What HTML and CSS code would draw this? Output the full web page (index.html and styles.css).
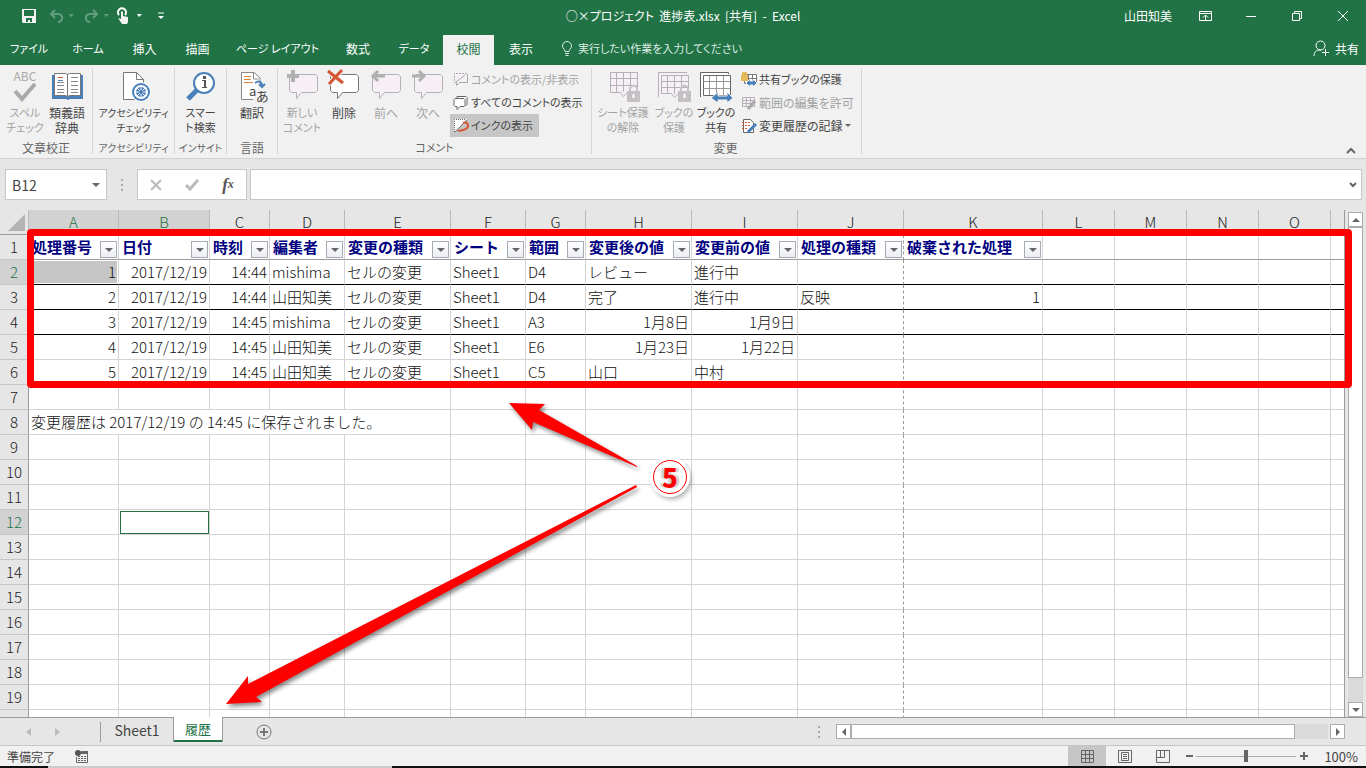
FILE: index.html
```html
<!DOCTYPE html>
<html lang="ja">
<head>
    <meta charset="UTF-8">
    <meta name="viewport" content="width=device-width, initial-scale=1.0">
    <title>進捗表.xlsx - Excel</title>
    <link rel="stylesheet" href="styles.css">
</head>
<body>
    <header class="titlebar">
        <div class="quick">
            <button class="qbtn" aria-label="上書き保存"><svg width="14" height="14"><path fill="#f3f3f3" fill-rule="evenodd" d="M0 0h14v14H1l-1-1zM2 1v6h10V1zM4 9v4h2v-2h2v2h2V9z"/></svg></button>
            <button class="qbtn faded" aria-label="元に戻す"><svg width="22" height="14"><path fill="none" stroke="#fff" stroke-width="2" d="M6 1 2 5l4 4M2 5h7c6 0 5 8 0 8"/><path fill="#fff" d="M20 5h5l-3 3z"/></svg></button>
            <button class="qbtn faded" aria-label="やり直し"><svg width="22" height="14"><path fill="none" stroke="#fff" stroke-width="2" d="M9 1l4 4-4 4M13 5H6c-6 0-5 8 0 8"/><path fill="#fff" d="M20 5h5l-3 3z"/></svg></button>
            <button class="qbtn touch" aria-label="タッチ/マウス モード"><svg width="26" height="16"><path fill="none" stroke="#fff" stroke-width="2" d="M2 7a4 4 0 1 1 6 0"/><path fill="#f3f3f3" d="M4 4c0-1 2-1 2 0v4l5 1v5l-1 2H5L1 10l3 1z"/><path fill="#fff" d="M20 6h5l-3 3z"/></svg></button>
            <button class="qbtn custom" aria-label="クイック アクセス"><svg width="6" height="8"><path stroke="#fff" d="M0 1h6"/><path fill="#fff" d="M0 4h6L3 7z"/></svg></button>
        </div>
        <h1 class="doc-title">○×プロジェクト  進捗表.xlsx  [共有]  -  Excel</h1>
        <div class="window-side">
            <span class="user">山田知美</span>
            <button class="wbtn" aria-label="リボンの表示オプション"><svg width="13" height="10"><path fill="none" stroke="#fff" d="M.5.5h12v9H.5zM0 2.500h13M6.500 9V4M4 6.500l2.500-2.500L9 6.500"/></svg></button>
            <button class="wbtn" aria-label="最小化"><svg width="10" height="10"><path stroke="#fff" d="M0 5.500h10"/></svg></button>
            <button class="wbtn" aria-label="元のサイズに戻す"><svg width="10" height="10"><path fill="none" stroke="#fff" d="M.5 2.500h7v7h-7zM2.500 2V.5h7v7H8"/></svg></button>
            <button class="wbtn" aria-label="閉じる"><svg width="10" height="10"><path stroke="#fff" d="M0 0l10 10M10 0 0 10"/></svg></button>
        </div>
    </header>

    <nav class="tabs">
        <div class="tab-list">
            <a href="#" class="kana">ファイル</a>
            <a href="#" class="kana">ホーム</a>
            <a href="#">挿入</a>
            <a href="#">描画</a>
            <a href="#" class="kana">ページ レイアウト</a>
            <a href="#">数式</a>
            <a href="#" class="kana">データ</a>
            <a href="#" class="active">校閲</a>
            <a href="#">表示</a>
        </div>
        <button class="tell-me kana"><svg width="12" height="15"><path fill="none" stroke="#dcebe2" d="M4 10.500c0-2-2.500-3-2.500-5.500a4 4 0 0 1 9 0c0 2.500-2.500 3.500-2.500 5.500zM4 12.500h4M4.500 14.500h3"/></svg>実行したい作業を入力してください</button>
        <button class="share"><svg width="16" height="17"><path fill="none" stroke="#fff" d="M1 16c0-4 2-6 6-6h1"/><circle cx="7.500" cy="5.500" r="4.500" fill="none" stroke="#fff"/><path stroke="#fff" d="M12.500 9v7M9 12.500h7"/></svg>共有</button>
    </nav>

    <section class="ribbon">
        <div class="group">
            <div class="group-body">
                <button class="big kana" disabled><svg width="36" height="36"><text x="18" y="13" text-anchor="middle" font-size="12" fill="#a9a9a9">ABC</text><path fill="none" stroke="#a9a9a9" stroke-width="4" d="M8 23l7 8 13-15"/></svg><span>スペル<br>チェック</span></button>
                <button class="big"><svg width="36" height="36"><path fill="#4a80b9" d="M3 7h31v24H21l-2 1-2-1H3z"/><path fill="#fff" stroke="#777" d="M5.500 5.500h11l2 1 2-1h11v22h-11l-2 1-2-1h-11zM18.500 6v22"/><path stroke="#888" d="M8 14.500h7M8 17.500h7M8 21.500h7M8 24.500h7M22 9.500h7M22 13.500h7M22 17.500h7M22 21.500h7M22 24.500h7"/><path stroke="#d65532" d="M9 9.500h5"/><path stroke="#4a80b9" d="M9 12.500h5"/></svg><span>類義語<br>辞典</span></button>
            </div>
            <h2>文章校正</h2>
        </div>
        <div class="group">
            <div class="group-body">
                <button class="big wide tight"><svg width="36" height="36"><path fill="#fff" stroke="#777" d="M7.500 4.500h13l7 7v20h-20z"/><path fill="none" stroke="#777" d="M20.500 4.500v7h7"/><circle cx="25" cy="24" r="10" fill="#fff"/><circle cx="25" cy="24" r="9" fill="#4a80b9"/><circle cx="25" cy="24" r="6" fill="none" stroke="#fff" stroke-width="2"/><path stroke="#fff" d="M25 18v12M19 24h12M21 20l8 8M29 20l-8 8"/><circle cx="25" cy="24" r="2" fill="#4a80b9"/></svg><span>アクセシビリティ<br>チェック</span></button>
            </div>
            <h2 class="tight">アクセシビリティ</h2>
        </div>
        <div class="group">
            <div class="group-body">
                <button class="big kana"><svg width="36" height="36"><path stroke="#4a80b9" stroke-width="5" d="M14 22 5 31"/><circle cx="21" cy="15" r="10" fill="#fff" stroke="#4a80b9" stroke-width="2"/><path fill="#555" d="M19 12h4v7h1v1h-5v-1h2v-6h-2zM20 8h3v3h-3z"/></svg><span>スマー<br>ト検索</span></button>
            </div>
            <h2 class="tight">インサイト</h2>
        </div>
        <div class="group">
            <div class="group-body">
                <button class="big"><svg width="36" height="36"><path fill="#fff" stroke="#888" d="M26 14v-4l-6-5.500H7.500v27H19"/><path fill="none" stroke="#888" d="M19.500 5v6h5"/><path stroke="#e0823d" d="M10 8.500h7M10 11.500h7M10 14.500h9"/><path fill="none" stroke="#4a80b9" stroke-width="2" d="M21 15c4-3 7-1 7 3M25 16l3 3 3-3"/><text x="15" y="28" font-size="13" fill="#444">a</text><text x="22" y="33" font-size="13" fill="#444">あ</text></svg><span>翻訳</span></button>
            </div>
            <h2>言語</h2>
        </div>
        <div class="group">
            <div class="group-body">
                <button class="big kana" disabled><svg width="36" height="36"><path fill="#f6eff6" stroke="#b5b0b5" d="M7 6.500h24.500l2 2v14l-2 2h-14l-5 6v-6h-5l-2-2v-14z"/><path stroke="#b0b0b0" stroke-width="4" d="M3 8h12M9 2v12"/></svg><span>新しい<br>コメント</span></button>
                <button class="big"><svg width="36" height="36"><path fill="#fff" stroke="#777" d="M6 6.500h24.500l2 2v14l-2 2h-14l-5 6v-6h-5l-2-2v-14z"/><path stroke="#f1f1f1" stroke-width="5" d="M2 3l15 12M16 2 3 16"/><path stroke="#d65532" stroke-width="3" d="M2 3l15 12M16 2 3 16"/></svg><span>削除</span></button>
                <button class="big" disabled><svg width="36" height="36"><path fill="#f6eff6" stroke="#b5b0b5" d="M6 6.500h24.500l2 2v14l-2 2h-14l-5 6v-6h-5l-2-2v-14z"/><path fill="none" stroke="#b0b0b0" stroke-width="3" d="M17 8H5M10 3 5 8l5 5"/></svg><span>前へ</span></button>
                <button class="big" disabled><svg width="36" height="36"><path fill="#f6eff6" stroke="#b5b0b5" d="M6 6.500h24.500l2 2v14l-2 2h-14l-5 6v-6h-5l-2-2v-14z"/><path fill="none" stroke="#b0b0b0" stroke-width="3" d="M2 8h12M9 3l5 5-5 5"/></svg><span>次へ</span></button>
                <div class="small-list">
                    <button class="small kana" disabled><svg width="16" height="16"><path fill="#f6eff6" stroke="#aaa" stroke-dasharray="2 1" d="M14 1.500H1.500v9"/><path fill="none" stroke="#aaa" d="M14.500 2v8.500h-8l-3 3v-3H2M3 10l9-7"/></svg>コメントの表示/非表示</button>
                    <button class="small kana"><svg width="16" height="16"><path fill="#fff" stroke="#666" d="M4 3.500V1.500h9l1 1v7l-1 1h-1"/><path fill="#fff" stroke="#666" d="M2 3.500h9l1 1v6l-1 1H7l-3 3v-3H2l-1-1v-6z"/></svg>すべてのコメントの表示</button>
                    <button class="small kana pressed"><svg width="16" height="16"><path fill="#fff" d="M1 1h13L1 14z"/><path fill="none" stroke="#666" stroke-dasharray="1 1" d="M1.500 14V1.500H13"/><path stroke="#777" d="M2 14 14 2"/><path fill="none" stroke="#d65532" stroke-width="2" d="M10 5c5-2 6 3 4 5-3 3-6 2-9 3"/></svg>インクの表示</button>
                </div>
            </div>
            <h2 class="kana">コメント</h2>
        </div>
        <div class="group">
            <div class="group-body">
                <button class="big mid kana" disabled><svg width="36" height="36"><path fill="#f6eff6" stroke="#b5b0b5" d="M5.500 4.500h27v20h-10l-4 4-3-4h-10zM11.500 4v20M18.500 4v20M25.500 4v20M5 10.500h27M5 17.500h27"/><path fill="none" stroke="#c8c4c8" stroke-width="2" d="M25 24v-4q4-5 7 0v4"/><path fill="#c4c0c4" d="M22 23h13v11H22z"/><path stroke="#fff" stroke-width="2" d="M28.500 26v4"/></svg><span>シート保護<br>の解除</span></button>
                <button class="big kana" disabled><svg width="36" height="36"><path fill="#f6eff6" stroke="#b5b0b5" d="M2.500 29V4.500h28V6M5.500 7.500h27v18h-10l-4 4-3-4h-10zM11.500 8v18M18.500 8v18M25.500 8v18M5 13.500h27M5 19.500h27"/><path fill="none" stroke="#c8c4c8" stroke-width="2" d="M25 24v-4q4-5 7 0v4"/><path fill="#c4c0c4" d="M22 23h13v11H22z"/><path stroke="#fff" stroke-width="2" d="M28.500 26v4"/></svg><span>ブックの<br>保護</span></button>
                <button class="big kana"><svg width="36" height="36"><path fill="#fff" stroke="#666" d="M2.500 29V4.500h28V6M5.500 7.500h27v20h-27z"/><path fill="none" stroke="#999" d="M11.500 8v19M18.500 8v19M25.500 8v19M5 13.500h27M5 20.500h27"/><path fill="#4a80b9" stroke="#f1f1f1" d="M13 30l7-6v4h9v-4l6 6-6 5v-3h-9v3z"/></svg><span>ブックの<br>共有</span></button>
                <div class="small-list">
                    <button class="small kana"><svg width="16" height="16"><path fill="#fff" stroke="#777" d="M3.500 2.500h12v9h-12zM7.500 2v9M11.500 2v9M3 6.500h12"/><path fill="#e8b95b" d="M0 3h7v6H0z"/><path fill="none" stroke="#e8b95b" stroke-width="2" d="M2 4V1h3v3"/><path fill="#4a80b9" stroke="#f1f1f1" d="M5 11l4-4v2h3V7l4 4-4 4v-2H9v2z"/></svg>共有ブックの保護</button>
                    <button class="small" disabled><svg width="16" height="16"><path fill="#f6eff6" stroke="#b5b0b5" d="M1.500 2.500h12v9h-12zM5.500 2v9M9.500 2v9M1 5.500h12M1 8.500h12"/><path stroke="#a9a9a9" stroke-width="3" d="M14 6l-7 8"/></svg>範囲の編集を許可</button>
                    <button class="small"><svg width="16" height="16"><path fill="#fff" stroke="#666" d="M2.500 1.500h7l3 3v10h-10z"/><path stroke="#d65532" stroke-dasharray="2 1" d="M1 4.500h8M1 7.500h8M1 10.500h5"/><path stroke="#4a80b9" stroke-width="3" d="M15 6l-8 8"/></svg>変更履歴の記録<svg width="6" height="4"><path fill="#666" d="M0 0h6L3 3z"/></svg></button>
                </div>
            </div>
            <h2>変更</h2>
        </div>
        <button class="collapse" aria-label="リボンを折りたたむ"><svg width="10" height="7"><path fill="none" stroke="#666" stroke-width="2" d="M1 6l4-4 4 4"/></svg></button>
    </section>

    <section class="formula-bar">
        <div class="name-box">
            <input type="text" value="B12" aria-label="名前ボックス">
            <svg width="8" height="4"><path fill="#666" d="M0 0h8L4 4z"/></svg>
        </div>
        <svg class="grip" width="3" height="12"><path fill="#aaa" d="M0 0h2v2H0zM0 5h2v2H0zM0 10h2v2H0z"/></svg>
        <div class="fx-box">
            <button aria-label="キャンセル"><svg width="12" height="12"><path stroke="#bbb" stroke-width="2" d="M1 1l10 10M11 1 1 11"/></svg></button>
            <button aria-label="入力"><svg width="14" height="12"><path fill="none" stroke="#bbb" stroke-width="3" d="M1 6l4 4 8-9"/></svg></button>
            <button class="fx" aria-label="関数の挿入"><i>f</i><small>x</small></button>
        </div>
        <div class="formula-input">
            <input type="text" aria-label="数式バー">
            <svg width="8" height="6"><path fill="none" stroke="#666" stroke-width="2" d="M1 1l3 3 3-3"/></svg>
        </div>
    </section>

    <main class="workspace">
        <div class="sheet">
            <table>
                <colgroup>
                    <col class="w-head"><col class="w-a"><col class="w-b"><col class="w-s"><col class="w-m"><col class="w-l"><col class="w-m"><col class="w-s"><col class="w-l"><col class="w-l"><col class="w-l"><col class="w-k"><col class="w-n"><col class="w-n"><col class="w-n"><col class="w-n"><col>
                </colgroup>
                <thead>
                    <tr><th class="corner"><svg width="17" height="17"><path fill="#b4b4b4" d="M17 0v17H0z"/></svg></th><th class="sel">A</th><th class="sel">B</th><th>C</th><th>D</th><th>E</th><th>F</th><th>G</th><th>H</th><th>I</th><th>J</th><th>K</th><th>L</th><th>M</th><th>N</th><th>O</th><th></th></tr>
                </thead>
                <tbody>
                    <tr class="titles">
                        <th>1</th>
                        <td><div>処理番号<button aria-label="処理番号"></button></div></td>
                        <td><div>日付<button aria-label="日付"></button></div></td>
                        <td><div>時刻<button aria-label="時刻"></button></div></td>
                        <td><div>編集者<button aria-label="編集者"></button></div></td>
                        <td><div>変更の種類<button aria-label="変更の種類"></button></div></td>
                        <td><div>シート<button aria-label="シート"></button></div></td>
                        <td><div>範囲<button aria-label="範囲"></button></div></td>
                        <td><div>変更後の値<button aria-label="変更後の値"></button></div></td>
                        <td><div>変更前の値<button aria-label="変更前の値"></button></div></td>
                        <td><div>処理の種類<button aria-label="処理の種類"></button></div></td>
                        <td><div>破棄された処理<button aria-label="破棄された処理"></button></div></td>
                        <td></td><td></td><td></td><td></td><td></td>
                    </tr>
                    <tr class="ruled"><th class="sel">2</th><td class="num picked">1</td><td class="num">2017/12/19</td><td class="num">14:44</td><td>mishima</td><td>セルの変更</td><td>Sheet1</td><td>D4</td><td>レビュー</td><td>進行中</td><td></td><td></td><td></td><td></td><td></td><td></td><td></td></tr>
                    <tr class="ruled"><th>3</th><td class="num">2</td><td class="num">2017/12/19</td><td class="num">14:44</td><td>山田知美</td><td>セルの変更</td><td>Sheet1</td><td>D4</td><td>完了</td><td>進行中</td><td>反映</td><td class="num">1</td><td></td><td></td><td></td><td></td><td></td></tr>
                    <tr class="ruled"><th>4</th><td class="num">3</td><td class="num">2017/12/19</td><td class="num">14:45</td><td>mishima</td><td>セルの変更</td><td>Sheet1</td><td>A3</td><td class="num">1月8日</td><td class="num">1月9日</td><td></td><td></td><td></td><td></td><td></td><td></td><td></td></tr>
                    <tr><th>5</th><td class="num">4</td><td class="num">2017/12/19</td><td class="num">14:45</td><td>山田知美</td><td>セルの変更</td><td>Sheet1</td><td>E6</td><td class="num">1月23日</td><td class="num">1月22日</td><td></td><td></td><td></td><td></td><td></td><td></td><td></td></tr>
                    <tr><th>6</th><td class="num">5</td><td class="num">2017/12/19</td><td class="num">14:45</td><td>山田知美</td><td>セルの変更</td><td>Sheet1</td><td>C5</td><td>山口</td><td>中村</td><td></td><td></td><td></td><td></td><td></td><td></td><td></td></tr>
                    <tr><th>7</th><td></td><td></td><td></td><td></td><td></td><td></td><td></td><td></td><td></td><td></td><td></td><td></td><td></td><td></td><td></td><td></td></tr>
                    <tr class="note"><th>8</th><td colspan="5">変更履歴は 2017/12/19 の 14:45 に保存されました。</td><td></td><td></td><td></td><td></td><td class="page-edge"></td><td></td><td></td><td></td><td></td><td></td><td></td></tr>
                    <tr><th>9</th><td></td><td></td><td></td><td></td><td></td><td></td><td></td><td></td><td></td><td></td><td></td><td></td><td></td><td></td><td></td><td></td></tr>
                    <tr><th>10</th><td></td><td></td><td></td><td></td><td></td><td></td><td></td><td></td><td></td><td></td><td></td><td></td><td></td><td></td><td></td><td></td></tr>
                    <tr><th>11</th><td></td><td></td><td></td><td></td><td></td><td></td><td></td><td></td><td></td><td></td><td></td><td></td><td></td><td></td><td></td><td></td></tr>
                    <tr><th class="sel">12</th><td></td><td class="cursor"></td><td></td><td></td><td></td><td></td><td></td><td></td><td></td><td></td><td></td><td></td><td></td><td></td><td></td><td></td></tr>
                    <tr><th>13</th><td></td><td></td><td></td><td></td><td></td><td></td><td></td><td></td><td></td><td></td><td></td><td></td><td></td><td></td><td></td><td></td></tr>
                    <tr><th>14</th><td></td><td></td><td></td><td></td><td></td><td></td><td></td><td></td><td></td><td></td><td></td><td></td><td></td><td></td><td></td><td></td></tr>
                    <tr><th>15</th><td></td><td></td><td></td><td></td><td></td><td></td><td></td><td></td><td></td><td></td><td></td><td></td><td></td><td></td><td></td><td></td></tr>
                    <tr><th>16</th><td></td><td></td><td></td><td></td><td></td><td></td><td></td><td></td><td></td><td></td><td></td><td></td><td></td><td></td><td></td><td></td></tr>
                    <tr><th>17</th><td></td><td></td><td></td><td></td><td></td><td></td><td></td><td></td><td></td><td></td><td></td><td></td><td></td><td></td><td></td><td></td></tr>
                    <tr><th>18</th><td></td><td></td><td></td><td></td><td></td><td></td><td></td><td></td><td></td><td></td><td></td><td></td><td></td><td></td><td></td><td></td></tr>
                    <tr><th>19</th><td></td><td></td><td></td><td></td><td></td><td></td><td></td><td></td><td></td><td></td><td></td><td></td><td></td><td></td><td></td><td></td></tr>
                    <tr><th>20</th><td></td><td></td><td></td><td></td><td></td><td></td><td></td><td></td><td></td><td></td><td></td><td></td><td></td><td></td><td></td><td></td></tr>
                </tbody>
            </table>
        </div>
        <div class="vscroll">
            <button class="arrow" aria-label="上へ"><svg width="8" height="4"><path fill="#666" d="M4 0l4 4H0z"/></svg></button>
            <div class="track"><div class="thumb"></div></div>
            <button class="arrow" aria-label="下へ"><svg width="8" height="4"><path fill="#666" d="M0 0h8L4 4z"/></svg></button>
        </div>

        <!-- step 5 callout: frame, arrows and number -->
        <div class="frame"></div>
        <svg class="arrows" width="440" height="330">
            <path fill="#f00" d="M293 13l36 1-6 6 98 56v1L317 32l-1 8z"/>
            <path fill="#f00" d="M10 314l22-28v8L420 95l1 2L40 307l6 5z"/>
        </svg>
        <div class="step">5</div>
    </main>

    <footer class="sheet-bar">
        <div class="sheet-nav">
            <button aria-label="前のシート"><svg width="5" height="8"><path fill="#bbb" d="M5 0v8L0 4z"/></svg></button>
            <button aria-label="次のシート"><svg width="5" height="8"><path fill="#bbb" d="M0 0v8l5-4z"/></svg></button>
        </div>
        <button class="sheet-tab">Sheet1</button>
        <button class="sheet-tab current">履歴</button>
        <button class="add" aria-label="新しいシート"><svg width="16" height="16"><circle cx="8" cy="8" r="7" fill="none" stroke="#777"/><path stroke="#777" stroke-width="2" d="M8 4v8M4 8h8"/></svg></button>
        <svg class="grip" width="3" height="12"><path fill="#aaa" d="M0 0h2v2H0zM0 5h2v2H0zM0 10h2v2H0z"/></svg>
        <div class="hscroll">
            <button class="arrow" aria-label="左へ"><svg width="4" height="8"><path fill="#666" d="M4 0v8L0 4z"/></svg></button>
            <div class="track"><div class="thumb"></div></div>
            <button class="arrow" aria-label="右へ"><svg width="4" height="8"><path fill="#666" d="M0 0v8l4-4z"/></svg></button>
        </div>
    </footer>

    <div class="status">
        <span class="ready">準備完了</span>
        <button class="macro" aria-label="マクロの記録"><svg width="14" height="13"><path fill="none" stroke="#666" d="M7 1.500h5.500v11h-11V7"/><path fill="#666" d="M6 1h7v3H6z"/><path stroke="#666" stroke-dasharray="2 1" d="M3 6.500h8M3 8.500h8M3 10.500h8"/><circle cx="3" cy="3" r="3" fill="#555"/></svg></button>
        <div class="views">
            <button class="on" aria-label="標準"><svg width="13" height="13"><path fill="none" stroke="#666" d="M.5.5h12v12H.5zM4.500 0v13M8.500 0v13M0 4.500h13M0 8.500h13"/></svg></button>
            <button aria-label="ページ レイアウト"><svg width="14" height="13"><path fill="none" stroke="#666" d="M.5.5h13v12H.5zM3.500 2.500h7v8h-7zM5 4.500h4M5 6.500h4M5 8.500h4"/></svg></button>
            <button aria-label="改ページ プレビュー"><svg width="14" height="13"><path fill="none" stroke="#666" d="M.5.5h13v12H.5zM.5 7.500h8V0M4.500 0v7"/></svg></button>
        </div>
        <div class="zoom">
            <button aria-label="縮小"><svg width="7" height="8"><path stroke="#666" stroke-width="2" d="M0 4h7"/></svg></button>
            <input type="range" min="0" max="100" value="50" aria-label="ズーム">
            <button aria-label="拡大"><svg width="8" height="8"><path stroke="#666" stroke-width="2" d="M0 4h8M4 0v8"/></svg></button>
            <span>100%</span>
        </div>
    </div>
    <div class="taskbar"></div>
</body>
</html>
```
FILE: styles.css
```css
* {
    box-sizing: border-box;
}
body {
    margin: 0;
    height: 100vh;
    display: flex;
    flex-direction: column;
    overflow: hidden;
    background: #e6e6e6;
    color: #444;
    font-family: "Noto Sans CJK JP", sans-serif;
    font-size: 12px;
    line-height: 15px;
    font-feature-settings: "palt";
}
button {
    font: inherit;
    font-feature-settings: inherit;
    color: inherit;
    background: none;
    border: 0;
    padding: 0;
    display: flex;
    align-items: center;
    justify-content: center;
    white-space: nowrap;
}
svg {
    display: block;
    flex: none;
    overflow: visible;
}
h1, h2 {
    margin: 0;
    font-size: 12px;
    font-weight: normal;
}
.kana {
    font-size: 11px;
}
.tight {
    font-size: 10px;
}

/* title bar */
.titlebar {
    display: grid;
    grid-template-columns: 1fr auto 1fr;
    align-items: center;
    height: 34px;
    flex: none;
    padding-bottom: 3px;
    background: #217346;
    color: #fff;
}
.quick {
    display: flex;
    align-items: center;
    padding-left: 22px;
    gap: 13px;
}
.faded {
    opacity: .3;
}
.touch {
    margin-left: -2px;
}
.custom {
    margin-left: 2px;
}
.doc-title {
    white-space: pre;
    font-size: 12px;
}
.window-side {
    display: flex;
    align-items: center;
    justify-content: flex-end;
}
.user {
    margin-right: 10px;
}
.wbtn {
    width: 46px;
    height: 31px;
}

/* ribbon tabs */
.tabs {
    display: flex;
    height: 31px;
    flex: none;
    background: #217346;
    color: #fff;
}
.tab-list {
    display: grid;
    grid-template-columns: 58px 60px 53px 53px 107px 54px 58px 51px 54px;
}
.tab-list a {
    color: #fff;
    text-decoration: none;
    text-align: center;
    line-height: 29px;
    white-space: nowrap;
}
.tab-list .active {
    background: #f1f1f1;
    color: #217346;
    margin-top: 1px;
    line-height: 28px;
}
.tell-me {
    gap: 5px;
    margin-left: 13px;
    padding-bottom: 2px;
    color: #dcebe2;
}
.share {
    gap: 6px;
    margin-left: auto;
    padding: 0 7px 2px 0;
}

/* ribbon */
.ribbon {
    display: flex;
    height: 94px;
    flex: none;
    background: #f1f1f1;
    border-bottom: 1px solid #d2d2d2;
}
.group {
    display: flex;
    flex-direction: column;
    flex: none;
    align-items: center;
    margin: 3px 0 4px;
    padding: 0 3px;
    border-right: 1px solid #d5d5d5;
}
.group h2 {
    margin: auto 0 -1px;
    color: #666;
    white-space: nowrap;
    line-height: 15px;
}
.group h2.kana {
    font-size: 11px;
}
.group h2.tight {
    font-size: 10px;
}
.group-body {
    display: flex;
    align-items: flex-start;
}
.group:nth-child(1) {
    width: 93px;
}
.group:nth-child(2) {
    width: 82px;
}
.group:nth-child(3) {
    width: 52px;
}
.group:nth-child(4) {
    width: 51px;
}
.group:nth-child(5) {
    width: 314px;
    align-items: stretch;
    text-align: center;
}
.group:nth-child(6) {
    width: 270px;
    align-items: stretch;
    text-align: center;
    padding-left: 1px;
}
.big {
    width: 42px;
    flex: none;
    flex-direction: column;
    justify-content: flex-start;
    text-align: center;
}
.big span {
    margin-top: 1px;
}
.big.wide {
    width: 76px;
}
.big.mid {
    width: 60px;
}
button:disabled {
    color: #a3a3a3;
}
.small-list {
    display: flex;
    flex-direction: column;
    align-items: flex-start;
    margin-left: 1px;
}
.small {
    height: 23px;
    gap: 2px;
    padding: 0 3px;
}
.small.pressed {
    background: #c6c6c6;
    padding-right: 6px;
}
.collapse {
    margin: auto 10px 4px auto;
}

/* formula bar */
.formula-bar {
    display: flex;
    align-items: center;
    height: 51px;
    flex: none;
    padding: 0 4px 0 5px;
}
.name-box, .fx-box, .formula-input {
    display: flex;
    align-items: center;
    height: 31px;
    background: #fff;
    border: 1px solid #c6c6c6;
}
.formula-bar input {
    flex: 1;
    min-width: 0;
    border: 0;
    padding: 0 6px;
    background: none;
    color: #444;
    font: 14px "Noto Sans CJK JP", sans-serif;
}
.name-box {
    width: 102px;
    padding-right: 6px;
}
.formula-bar .grip {
    margin: 0 13px 0 14px;
}
.fx-box {
    width: 110px;
    margin-right: 3px;
}
.fx-box button {
    flex: 1;
}
.fx {
    font-family: "Liberation Serif", serif;
    font-size: 17px;
    font-weight: bold;
    color: #555;
}
.fx small {
    font-size: 12px;
    font-style: italic;
}
.formula-input {
    flex: 1;
    padding-right: 4px;
}

/* grid */
.workspace {
    position: relative;
    display: flex;
    flex: 1;
    min-height: 0;
}
.sheet {
    flex: 1;
    overflow: hidden;
    background: #fff;
    border-right: 1px solid #9b9b9b;
}
table {
    width: 100%;
    table-layout: fixed;
    border-collapse: separate;
    border-spacing: 0;
    font-size: 15px;
    font-weight: 300;
    line-height: 22px;
    font-feature-settings: normal;
}
.w-head { width: 29px; }
.w-a { width: 90px; }
.w-b { width: 91px; }
.w-s { width: 60px; }
.w-m { width: 75px; }
.w-l { width: 106px; }
.w-k { width: 139px; }
.w-n { width: 72px; }
td, th {
    height: 25px;
    padding: 0 2px;
    white-space: nowrap;
}
th {
    background: #e6e6e6;
    color: #222;
    font-weight: 300;
    border-right: 1px solid #bababa;
    border-bottom: 1px solid #9b9b9b;
    padding: 0;
}
tbody th {
    border-right-color: #9b9b9b;
    border-bottom-color: #c6c6c6;
}
th.sel {
    background: #d2d2d2;
    color: #217346;
}
.corner svg {
    margin-left: 8px;
}
td {
    color: #111;
    border-right: 1px solid #d4d4d4;
    border-bottom: 1px solid #d4d4d4;
}
td:last-child, th:last-child {
    border-right: 0;
}
td:nth-child(11), .page-edge {
    border-right: 1px dashed #999;
}
.note td:nth-child(11) {
    border-right: 1px solid #d4d4d4;
}
.note td.page-edge {
    border-right: 1px solid #d4d4d4;
}
.note td:nth-child(7) {
    border-right: 1px dashed #999;
}
.num {
    text-align: right;
}
.ruled td {
    border-bottom-color: #000;
}
.titles td {
    color: #000080;
    font-weight: bold;
    padding: 0 0 0 3px;
    border-bottom-color: #9b9b9b;
}
.titles div {
    display: flex;
    justify-content: space-between;
    align-items: center;
    height: 24px;
}
.titles button {
    width: 17px;
    height: 17px;
    flex: none;
    align-self: flex-end;
    margin: 0 1px 1px 0;
    border: 1px solid #a5abb5;
    background: linear-gradient(#fff, #eceef3);
}
.titles button::after {
    content: "";
    border: 4px solid transparent;
    border-top-color: #666;
    border-bottom: 0;
}
.picked {
    background: #c6c6c6;
    box-shadow: inset 0 0 0 1px #fff;
}
.cursor {
    outline: 1px solid #217346;
    outline-offset: -2px;
}

/* scroll bars */
.vscroll {
    display: flex;
    flex-direction: column;
    width: 21px;
    padding: 2px 3px 0;
}
.arrow {
    width: 15px;
    height: 15px;
    flex: none;
    background: #fff;
    border: 1px solid #ababab;
}
.track {
    flex: 1;
    background: #dadada;
}
.thumb {
    background: #fff;
    border: 1px solid #ababab;
}
.vscroll .thumb {
    height: 95%;
}
.hscroll {
    display: flex;
    width: 509px;
    margin-right: 21px;
}
.hscroll .track {
    margin-right: 2px;
}
.hscroll .thumb {
    width: 93%;
    height: 15px;
}

/* callout */
.frame {
    position: absolute;
    top: 19px;
    left: 27px;
    right: 14px;
    height: 159px;
    border: 7px solid #f00;
    border-radius: 4px;
}
.arrows {
    position: absolute;
    top: 180px;
    left: 216px;
    filter: drop-shadow(2px 3px 2px rgba(0, 0, 0, .45));
}
.step {
    position: absolute;
    top: 250px;
    left: 653px;
    width: 34px;
    height: 34px;
    border: 1px solid #f00;
    border-radius: 50%;
    background: #fff;
    box-shadow: 0 0 0 3px #fff, 2px 3px 5px 2px rgba(0, 0, 0, .35);
    color: #f00;
    font-size: 26px;
    font-weight: 900;
    line-height: 31px;
    text-align: center;
    text-shadow: -3px 0 2px #ccc, 3px 0 2px #ccc;
}

/* sheet tabs */
.sheet-bar {
    display: flex;
    align-items: center;
    height: 28px;
    flex: none;
    border-top: 1px solid #9b9b9b;
}
.sheet-nav {
    display: flex;
    gap: 24px;
    width: 101px;
    height: 20px;
    padding-left: 26px;
    border-right: 1px solid #9b9b9b;
}
.sheet-tab {
    width: 72px;
    height: 25px;
    padding-bottom: 2px;
    font-size: 14px;
}
.sheet-tab.current {
    width: 50px;
    align-self: flex-start;
    margin-top: -1px;
    font-size: 13px;
    background: #fff;
    color: #217346;
    border: 1px solid #9b9b9b;
    border-width: 0 1px;
    box-shadow: inset 0 -2px #217346;
}
.add {
    margin-left: 33px;
}
.sheet-bar .grip {
    margin: 0 15px 0 auto;
}

/* status bar */
.status {
    display: flex;
    align-items: center;
    height: 21px;
    flex: none;
    padding-left: 7px;
    background: #f1f1f1;
    border-top: 1px solid #c6c6c6;
}
.macro {
    margin-left: 20px;
}
.views {
    display: flex;
    align-self: stretch;
    margin-left: auto;
}
.views button {
    width: 38px;
}
.views .on {
    background: #c6c6c6;
}
.zoom {
    display: flex;
    align-items: center;
    padding: 0 8px 0 4px;
}
.zoom input {
    appearance: none;
    width: 100px;
    height: 12px;
    margin: 0 4px 0 3px;
    background: linear-gradient(#aaa, #aaa) center / 100% 1px no-repeat;
}
.zoom input::-webkit-slider-thumb {
    appearance: none;
    width: 4px;
    height: 12px;
    background: #666;
}
.zoom span {
    width: 50px;
    font-size: 13px;
    text-align: right;
}
.taskbar {
    height: 2px;
    flex: none;
    background: linear-gradient(90deg, #111 48px, #ccc 48px, #ccc 392px, #111 392px);
}
```
